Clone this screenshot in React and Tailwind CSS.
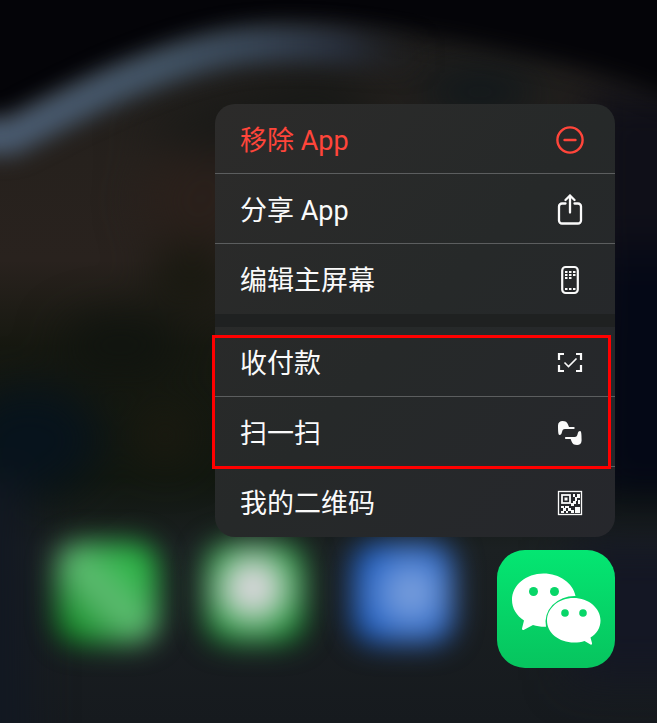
import React from "react";

const Wallpaper = () => (
  <svg
    className="absolute inset-0 w-full h-full"
    viewBox="0 0 657 723"
    preserveAspectRatio="none"
    aria-hidden="true"
  >
    <defs>
      <linearGradient id="ground" x1="0" y1="0" x2="0" y2="1">
        <stop offset="0" stopColor="#1c1c1b" />
        <stop offset="0.22" stopColor="#26211d" />
        <stop offset="0.36" stopColor="#29221e" />
        <stop offset="0.48" stopColor="#161810" />
        <stop offset="0.66" stopColor="#11170f" />
        <stop offset="0.76" stopColor="#1b2022" />
        <stop offset="1" stopColor="#161a1e" />
      </linearGradient>
      <linearGradient id="rim" gradientUnits="userSpaceOnUse" x1="0" y1="0" x2="657" y2="0">
        <stop offset="0" stopColor="#4b5d73" />
        <stop offset="0.25" stopColor="#435567" />
        <stop offset="0.4" stopColor="#374556" />
        <stop offset="0.52" stopColor="#282f3c" />
        <stop offset="0.65" stopColor="#1d1f22" stopOpacity="0" />
      </linearGradient>
      <filter id="soft" x="-50%" y="-50%" width="200%" height="200%" colorInterpolationFilters="sRGB">
        <feGaussianBlur stdDeviation="11" />
      </filter>
      <filter id="wide" x="-80%" y="-80%" width="260%" height="260%" colorInterpolationFilters="sRGB">
        <feGaussianBlur stdDeviation="22" />
      </filter>
    </defs>
    <rect width="657" height="723" fill="url(#ground)" />
    <g filter="url(#wide)">
      <path d="M130 130L330 65L400 130L230 160Z" fill="#181917" />
      <ellipse cx="200" cy="200" rx="60" ry="50" fill="#2a201b" />
      <ellipse cx="190" cy="275" rx="40" ry="30" fill="#17180f" />
      <ellipse cx="120" cy="345" rx="60" ry="30" fill="#10140f" />
      <ellipse cx="30" cy="440" rx="70" ry="55" fill="#07131c" />
      <ellipse cx="165" cy="435" rx="30" ry="30" fill="#1b1a10" />
      <ellipse cx="480" cy="92" rx="60" ry="16" fill="#09151b" />
      <rect x="585" y="90" width="120" height="160" fill="#0f0f18" />
      <rect x="590" y="250" width="120" height="250" fill="#040816" />
      <rect x="-60" y="480" width="90" height="300" fill="#121822" />
      <rect x="570" y="540" width="140" height="140" fill="#141724" />
    </g>
    <path
      d="M-40 -40H720V120C660 90 590 68 520 54C460 40 340 18 270 24C190 30 90 75 15 115L-40 125Z"
      fill="#040408"
      filter="url(#soft)"
    />
    <path
      d="M-40 137H10C60 112 100 90 133 78C180 59 215 49 250 46C300 41 340 46 460 60"
      fill="none"
      stroke="url(#rim)"
      strokeWidth="35"
      filter="url(#soft)"
    />
  </svg>
);

const RemoveIcon = () => (
  <svg className="w-8 h-8" viewBox="0 0 32 32" fill="none" stroke="currentColor" strokeWidth="2.4" strokeLinecap="round">
    <circle cx="16" cy="16" r="12.6" />
    <path d="M10.500 16h11" />
  </svg>
);

const ShareIcon = () => (
  <svg className="w-8 h-8" viewBox="0 0 32 32" fill="none" stroke="currentColor" strokeWidth="2.3" strokeLinecap="round" strokeLinejoin="round">
    <path d="M11.500 9.500H8a3 3 0 0 0-3 3V26.500a3 3 0 0 0 3 3h16a3 3 0 0 0 3-3V12.500a3 3 0 0 0-3-3h-3.500" />
    <path d="M16 18.500V1.500M11.500 6L16 1.500l4.500 4.500" />
  </svg>
);

const PhoneGridIcon = () => (
  <svg className="w-8 h-8" viewBox="0 0 32 32" fill="currentColor">
    <rect x="8.200" y="3" width="15.600" height="26" rx="3.500" fill="none" stroke="currentColor" strokeWidth="2.200" />
    {[
      [11, 7], [15, 7], [19, 7],
      [11, 10], [15, 10], [19, 10],
      [11, 13], [15, 13],
      [11, 24], [15, 24], [19, 24],
    ].map(([x, y]) => (
      <rect key={`${x}-${y}`} x={x} y={y} width="2.500" height="2" />
    ))}
  </svg>
);

const PayIcon = () => (
  <svg className="w-8 h-8" viewBox="0 0 32 32" fill="none" stroke="currentColor" strokeWidth="2.200">
    <path d="M10 7H5v6M22 7h5v6M10 24H5v-6M22 24h5v-6" />
    <path d="M10.500 15.500l4 4 8-8" strokeWidth="1.600" />
  </svg>
);

const ScanIcon = () => (
  <svg className="w-8 h-8" viewBox="0 0 32 32" fill="currentColor">
    <path d="M4 8.500C4 5.500 6 4 8.500 4C11.500 4 13.200 5 14 7.500L15 10H19.700A1 1 0 0 1 19.700 12H11C9 12 8.500 13 8 15C7.600 17 7 18 5.500 18C4.300 18 4 15 4 8.500Z" />
    <path
      transform="rotate(180 15.800 16)"
      d="M4 8.500C4 5.500 6 4 8.500 4C11.500 4 13.200 5 14 7.500L15 10H19.700A1 1 0 0 1 19.700 12H11C9 12 8.500 13 8 15C7.600 17 7 18 5.500 18C4.300 18 4 15 4 8.500Z"
    />
  </svg>
);

const QrIcon = () => (
  <svg className="w-8 h-8" viewBox="0 0 32 32" fill="currentColor">
    <rect x="4.500" y="4.500" width="23" height="23" fill="none" stroke="currentColor" strokeWidth="1.300" />
    <rect x="8" y="8" width="8" height="8" fill="none" stroke="currentColor" strokeWidth="1.800" />
    <path d="M10.500 10.500h3v3h-3zM23 7h3v4h-3zM19 7h2v3h-2zM21 10h2v4h-2zM24 13h2v4h-2zM19 14h3v3h-3zM17 16h3v3h-3zM7 19h3v2H7zM11 19h4v2h-4zM9 21h3v3H9zM14 21h3v3h-3zM7 24h3v2H7zM12 24h2v2h-2zM17 23h3v3h-3zM21 20h5v6h-5z" />
  </svg>
);

const WeChatLogo = () => (
  <svg className="w-full h-full" viewBox="0 0 118 118">
    <path
      fill="#fff"
      d="M46.500 23.500C29 23.500 15 35 15 50C15 58.500 19.500 65.500 27 70.500L25 78.500C25 80 26 80.500 27.500 79.500L36 75C40 76.200 44.500 77 49 76.800A29 26 0 0 1 78.500 46C76 33 62.500 23.500 46.500 23.500Z"
    />
    <path
      fill="#fff"
      d="M76.500 48C62 48 50 58 50 70.500C50 83 62 92.500 77 92.500C81 92.500 84.500 92 87.500 91L93.500 94.500C94.500 95 95.200 94.500 95 93L93.500 87.500C100 83.500 103.500 77.500 103.500 70.500C103.500 58 91.500 48 76.500 48Z"
    />
    <g fill="#08d668">
      <circle cx="36.500" cy="41.500" r="4.500" />
      <circle cx="57.500" cy="41.500" r="4.500" />
      <circle cx="68" cy="63" r="3.800" />
      <circle cx="86" cy="63" r="3.800" />
    </g>
  </svg>
);

const systemActions = [
  { label: "移除 App", icon: RemoveIcon, color: "text-[#ff453a]" },
  { label: "分享 App", icon: ShareIcon, color: "text-neutral-50" },
  { label: "编辑主屏幕", icon: PhoneGridIcon, color: "text-neutral-50" },
];

const appActions = [
  { label: "收付款", icon: PayIcon, color: "text-neutral-50" },
  { label: "扫一扫", icon: ScanIcon, color: "text-neutral-50" },
  { label: "我的二维码", icon: QrIcon, color: "text-neutral-50" },
];

const MenuGroup = ({ actions }) => (
  <ul className="divide-y divide-[#5c5e5f]">
    {actions.map(({ label, icon: Icon, color }) => (
      <li key={label} className="h-[70px]">
        <button
          type="button"
          className={`flex w-full h-full items-center justify-between pt-0.5 pl-[25px] pr-[29px] text-[27px] leading-9 ${color}`}
        >
          <span className="pt-0.5">{label}</span>
          <Icon />
        </button>
      </li>
    ))}
  </ul>
);

const dockApps = [
  {
    name: "Phone",
    fill: "bg-[linear-gradient(45deg,#0f8a22_12%,#4fb263_40%,#66bd78_50%,#45b75c_62%,#26b440_85%)]",
  },
  {
    name: "Messages",
    fill: "bg-[radial-gradient(circle_at_48%_45%,#dcd8de_22%,#58b36b_52%,#127a28_78%)]",
  },
  {
    name: "Browser",
    fill: "bg-[radial-gradient(circle_at_58%_50%,#7ea2dd_12%,#4379d0_48%,#1654b4_80%)]",
  },
];

const Dock = () => (
  <nav className="flex items-start justify-between pl-14">
    <div className="flex gap-[46px] -mt-2">
      {dockApps.map(({ name, fill }) => (
        <button key={name} type="button" aria-label={name} className="w-[102px] h-[102px]">
          <span className={`block w-full h-full rounded-3xl blur-[14px] ${fill}`} />
        </button>
      ))}
    </div>
    <button
      type="button"
      aria-label="WeChat"
      className="w-[118px] h-[118px] rounded-[28px] bg-linear-to-b from-[#04e672] to-[#07c45e]"
    >
      <WeChatLogo />
    </button>
  </nav>
);

const App = () => {
  return (
    <main className="relative min-h-screen overflow-hidden bg-[#14181f] font-[Roboto,'Noto_Sans_CJK_SC',sans-serif]">
      <Wallpaper />
      <div className="relative pt-[104px] pr-[42px]">
        <div className="relative z-10 ml-auto w-[400px] max-w-full">
          <div className="overflow-hidden rounded-[20px] bg-linear-to-br from-[#2c2b2a] via-[#262929] to-[#26272c]">
            <MenuGroup actions={systemActions} />
            <div className="h-[13px] bg-[#1f2121]" />
            <MenuGroup actions={appActions} />
          </div>
          {/* highlight round the payment and scan rows */}
          <div className="pointer-events-none absolute -left-[3px] right-1 top-[231px] h-[134px] border-3 border-[#ff0000]" />
        </div>
        <div className="pt-[13px]">
          <Dock />
        </div>
      </div>
    </main>
  );
};

export default App;
